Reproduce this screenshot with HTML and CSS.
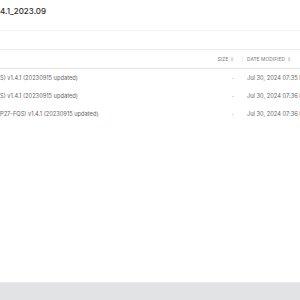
FILE: index.html
```html
<!DOCTYPE html>
<html>
<head>
<meta charset="utf-8">
<link rel="stylesheet" href="styles.css">
</head>
<body>
<div class="page">
  <main class="main">
    <div class="title">4.1_2023.09</div>
    <div class="toolbar"></div>
    <div class="thead">
      <div class="c-name"></div>
      <div class="c-size">SIZE <span class="sort">&#8661;</span></div>
      <div class="c-date">DATE MODIFIED <span class="sort">&#8661;</span></div>
    </div>
    <div class="row">
      <div class="c-name">S) v1.4.1 (20230915 updated)</div>
      <div class="c-size">-</div>
      <div class="c-date">Jul 30, 2024 07:35 PM</div>
    </div>
    <div class="row">
      <div class="c-name">S) v1.4.1 (20230915 updated)</div>
      <div class="c-size">-</div>
      <div class="c-date">Jul 30, 2024 07:36 PM</div>
    </div>
    <div class="row">
      <div class="c-name">P27-FQS) v1.4.1 (20230915 updated)</div>
      <div class="c-size">-</div>
      <div class="c-date">Jul 30, 2024 07:36 PM</div>
    </div>
  </main>
  <footer class="footer"></footer>
</div>
</body>
</html>
```
FILE: styles.css
```css
html, body {
  margin: 0;
  padding: 0;
  background: #fff;
}
.page {
  width: 300px;
  height: 300px;
  display: flex;
  flex-direction: column;
  overflow: hidden;
  font-family: Inter, "Liberation Sans", sans-serif;
}
.main {
  flex: 1;
  display: flex;
  flex-direction: column;
}
.title {
  height: 31px;
  box-sizing: border-box;
  border-bottom: 1px solid #f3f3f3;
  padding-top: 6px;
  font-size: 8px;
  font-weight: 500;
  color: #2b2b2b;
}
.toolbar {
  height: 18px;
  border-bottom: 1px solid #ececec;
}
.thead, .row {
  display: grid;
  grid-template-columns: 1fr 32px 53px;
  column-gap: 11px;
  align-items: center;
  white-space: nowrap;
}
.thead {
  height: 18px;
  border-bottom: 1px solid #e6e6e6;
  font-size: 4.8px;
  color: #777;
  letter-spacing: 0.1px;
}
.thead .c-date {
  border-left: 1px solid #eee;
  padding-left: 4px;
  margin-left: -5px;
}
.sort {
  color: #aaa;
  font-size: 5px;
}
.row {
  height: 18px;
  font-size: 5.7px;
  color: #666;
  margin-top: -1px;
}
.row + .row {
  margin-top: 0;
}
.c-name {
  overflow: hidden;
}
.c-size {
  text-align: right;
  padding-right: 2px;
}
.row .c-size {
  color: #aaa;
}
.c-date {
  overflow: hidden;
  text-overflow: clip;
}
.footer {
  height: 17px;
  background: #e2e3e5;
  border-top: 1px solid #ebecee;
}
```
